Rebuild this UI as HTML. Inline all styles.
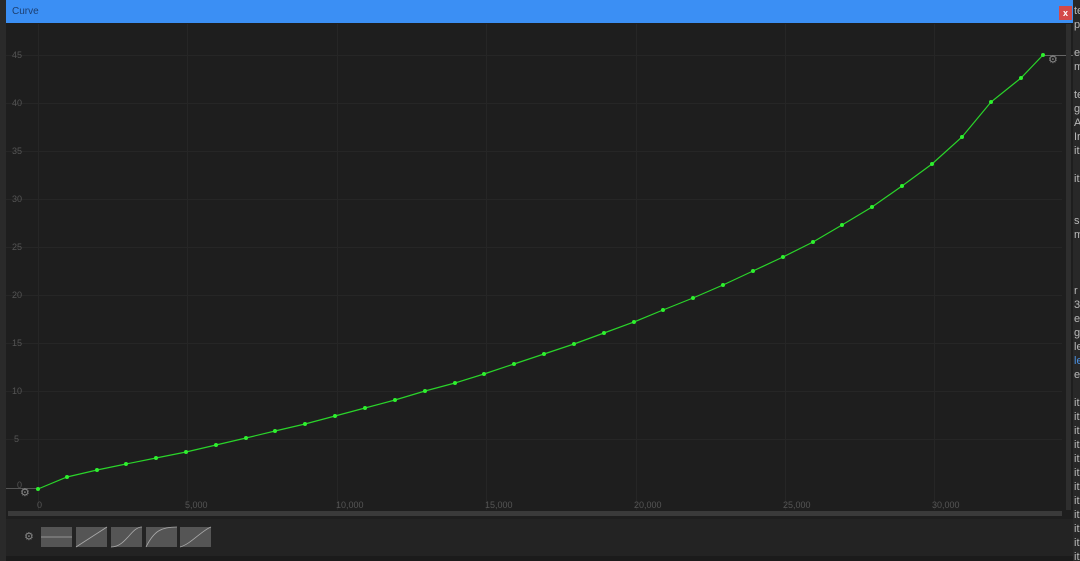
<!DOCTYPE html>
<html><head><meta charset="utf-8"><style>
*{margin:0;padding:0;box-sizing:border-box}
body{width:1080px;height:561px;background:#1b1b1b;overflow:hidden;position:relative;font-family:"Liberation Sans",sans-serif}
#left{position:absolute;left:0;top:0;width:6px;height:561px;background:#2a2a2a}
#right{position:absolute;left:1073px;top:0;width:7px;height:561px;background:#282828;color:#b8b8b8;font-size:11px;line-height:14px;overflow:hidden}
#right span{position:absolute;left:1px;white-space:nowrap}
#win{position:absolute;left:6px;top:0;width:1067px;height:556px;background:#1e1e1e}
#title{height:23px;background:#3b8ff4;color:#1d3f70;font-size:10px;padding:6px 0 0 6px}
#close{position:absolute;left:1053px;top:6px;width:13px;height:14px;background:#d44a4a;color:#fff;font-size:9px;text-align:center;line-height:14px;font-weight:bold}
#bottom{position:absolute;left:0;top:519px;width:1067px;height:37px;background:#232323}
.btn{position:absolute;top:8px;width:31px;height:20px;background:#555}
</style></head><body>
<div id="left"></div>
<div id="right">
<span style="top:4px">te</span><span style="top:18px">p</span><span style="top:46px">ec</span><span style="top:60px">m</span><span style="top:88px">te</span><span style="top:102px">gl</span><span style="top:116px">A</span><span style="top:130px">Ir</span><span style="top:144px">it</span><span style="top:172px">it</span><span style="top:214px">s</span><span style="top:228px">m</span><span style="top:284px">r</span><span style="top:298px">3.</span><span style="top:312px">e</span><span style="top:326px">g</span><span style="top:340px">le</span><span style="top:354px;color:#4a8fe0">le</span><span style="top:368px">e</span><span style="top:396px">it</span><span style="top:410px">it</span><span style="top:424px">it</span><span style="top:438px">it</span><span style="top:452px">it</span><span style="top:466px">it</span><span style="top:480px">it</span><span style="top:494px">it</span><span style="top:508px">it</span><span style="top:522px">it</span><span style="top:536px">it</span><span style="top:550px">it</span>
</div>
<div id="win">
<div id="title">Curve</div>
<div id="close">x</div>
<svg style="position:absolute;left:0;top:23px" width="1067" height="496" viewBox="6 23 1067 496">
<g stroke="#262626" stroke-width="1">
<path d="M38.5 24V510M187.5 24V510M337.5 24V510M486.5 24V510M636.5 24V510M785.5 24V510M934.5 24V510"/>
<path d="M6 55.5H1062M6 103.5H1062M6 151.5H1062M6 199.5H1062M6 247.5H1062M6 295.5H1062M6 343.5H1062M6 391.5H1062M6 439.5H1062"/>
</g>
<path d="M6 488.5H38" stroke="#555"/>
<path d="M1043 55.5H1073" stroke="#666"/>
<g fill="#555" font-size="9" font-family="Liberation Sans">
<text x="12" y="58">45</text><text x="12" y="106">40</text><text x="12" y="154">35</text><text x="12" y="202">30</text><text x="12" y="250">25</text><text x="12" y="298">20</text><text x="12" y="346">15</text><text x="12" y="394">10</text><text x="14" y="442">5</text><text x="17" y="488">0</text>
<text x="37" y="508">0</text><text x="185" y="508">5,000</text><text x="336" y="508">10,000</text><text x="485" y="508">15,000</text><text x="634" y="508">20,000</text><text x="783" y="508">25,000</text><text x="932" y="508">30,000</text>
</g>
<g fill="#888" font-size="11"><text x="20" y="496">⚙</text><text x="1048" y="63">⚙</text></g>
<polyline fill="none" stroke="#2ad42a" stroke-width="1.2" points="38,489 67,477 97,470 126,464 156,458 186,452 216,445 246,438 275,431 305,424 335,416 365,408 395,400 425,391 455,383 484,374 514,364 544,354 574,344 604,333 634,322 663,310 693,298 723,285 753,271 783,257 813,242 842,225 872,207 902,186 932,164 962,137 991,102 1021,78 1043,55"/>
<g fill="#2ef02e">
<circle cx="38" cy="489" r="2"/><circle cx="67" cy="477" r="2"/><circle cx="97" cy="470" r="2"/><circle cx="126" cy="464" r="2"/><circle cx="156" cy="458" r="2"/><circle cx="186" cy="452" r="2"/><circle cx="216" cy="445" r="2"/><circle cx="246" cy="438" r="2"/><circle cx="275" cy="431" r="2"/><circle cx="305" cy="424" r="2"/><circle cx="335" cy="416" r="2"/><circle cx="365" cy="408" r="2"/><circle cx="395" cy="400" r="2"/><circle cx="425" cy="391" r="2"/><circle cx="455" cy="383" r="2"/><circle cx="484" cy="374" r="2"/><circle cx="514" cy="364" r="2"/><circle cx="544" cy="354" r="2"/><circle cx="574" cy="344" r="2"/><circle cx="604" cy="333" r="2"/><circle cx="634" cy="322" r="2"/><circle cx="663" cy="310" r="2"/><circle cx="693" cy="298" r="2"/><circle cx="723" cy="285" r="2"/><circle cx="753" cy="271" r="2"/><circle cx="783" cy="257" r="2"/><circle cx="813" cy="242" r="2"/><circle cx="842" cy="225" r="2"/><circle cx="872" cy="207" r="2"/><circle cx="902" cy="186" r="2"/><circle cx="932" cy="164" r="2"/><circle cx="962" cy="137" r="2"/><circle cx="991" cy="102" r="2"/><circle cx="1021" cy="78" r="2"/><circle cx="1043" cy="55" r="2"/>
</g>
<rect x="8" y="511" width="1054" height="5" fill="#3a3a3a"/>
<rect x="1066" y="24" width="5" height="486" fill="#2e2e2e"/>
</svg>
<div id="bottom">
<div style="position:absolute;left:18px;top:11px;color:#888;font-size:11px">⚙</div>
<svg style="position:absolute;left:0;top:0" width="220" height="37">
<g fill="#555"><rect x="35" y="8" width="31" height="20"/><rect x="70" y="8" width="31" height="20"/><rect x="105" y="8" width="31" height="20"/><rect x="140" y="8" width="31" height="20"/><rect x="174" y="8" width="31" height="20"/></g>
<g fill="none" stroke="#aaa" stroke-width="0.8">
<path d="M35 18H66"/><path d="M70 28L101 8"/><path d="M105 28C120 28 125 8 136 8"/><path d="M140 28C148 12 155 8 171 8"/><path d="M174 28C185 25 195 12 205 8"/>
</g>
</svg>
</div>
</div>
</body></html>
